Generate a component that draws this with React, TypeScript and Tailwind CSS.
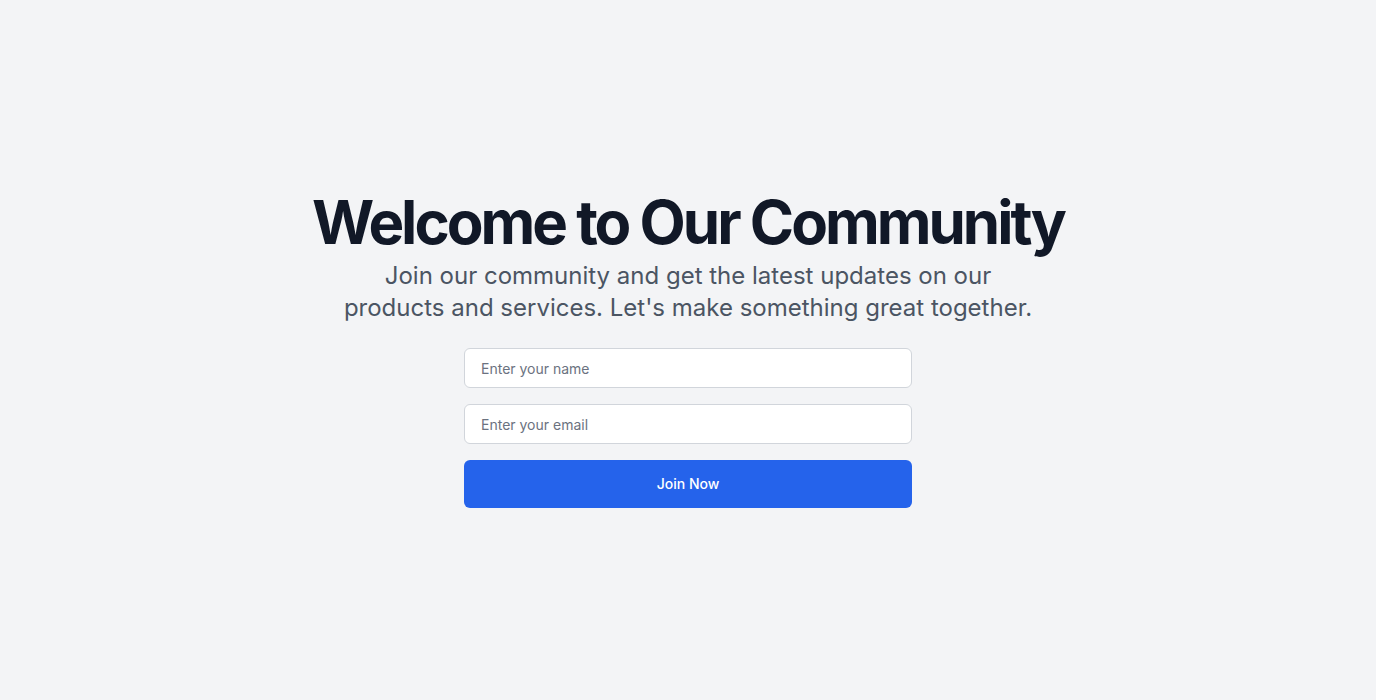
import React from "react";

export default function App() {
  return (
    <div
      className="min-h-screen bg-[#f3f4f6] flex items-center justify-center"
      style={{ fontFamily: "Inter, 'Noto Sans', sans-serif" }}
    >
      <div className="flex flex-col items-center text-center">
        <h1 className="text-6xl font-bold tracking-tighter text-[#111827] leading-none">
          Welcome to Our Community
        </h1>
        <p className="mt-2 max-w-[700px] text-2xl text-[#4b5563]">
          Join our community and get the latest updates on our products and services. Let's make something great together.
        </p>
        <form className="mt-6 w-[448px] flex flex-col gap-4" onSubmit={(e) => e.preventDefault()}>
          <input
            type="text"
            placeholder="Enter your name"
            className="h-10 w-full rounded-md border border-[#d1d5db] bg-white px-4 text-sm text-[#111827] placeholder:text-[#6b7280] outline-none"
          />
          <input
            type="email"
            placeholder="Enter your email"
            className="h-10 w-full rounded-md border border-[#d1d5db] bg-white px-4 text-sm text-[#111827] placeholder:text-[#6b7280] outline-none"
          />
          <button
            type="submit"
            className="h-12 w-full rounded-md bg-[#2563eb] text-sm font-medium text-white"
          >
            Join Now
          </button>
        </form>
      </div>
    </div>
  );
}
